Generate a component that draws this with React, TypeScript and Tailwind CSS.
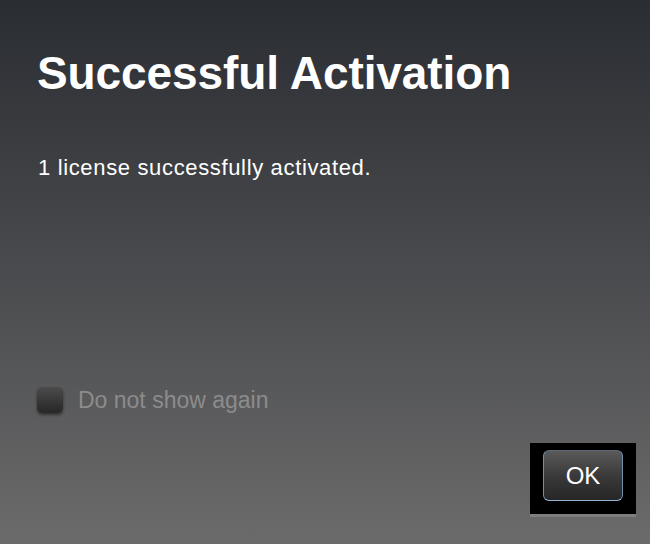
import { useState } from "react";

export default function App() {
  const [dontShow, setDontShow] = useState(false);

  return (
    <main
      className="h-[544px] w-[650px] flex flex-col bg-gradient-to-b from-[#2a2d32] via-[#4a4b4e] to-[#6b6b6b] text-white"
      style={{ fontFamily: '"Liberation Sans", Arial, sans-serif' }}
    >
      {/* Header */}
      <h1 className="pl-[37px] pt-[50px] text-[46px] font-bold leading-none tracking-[-0.1px]">
        Successful Activation
      </h1>

      <p className="pl-[38px] pt-[61px] text-[22px] leading-none tracking-[0.65px]">
        1 license successfully activated.
      </p>

      {/* Checkbox */}
      <label className="mt-[208px] ml-[37px] flex items-center gap-[15px] cursor-pointer">
        <button
          onClick={() => setDontShow(!dontShow)}
          className="h-[26px] w-[26px] rounded-[5px] bg-gradient-to-b from-[#4c4c4c] to-[#272727] shadow-[0_2px_3px_rgba(0,0,0,0.45)] flex items-center justify-center"
        >
          {dontShow && <span className="text-[16px] text-white">✓</span>}
        </button>
        <span className="text-[23px] leading-none text-[#8c8c8c]">
          Do not show again
        </span>
      </label>

      {/* OK Button */}
      <div className="mt-[30px] mr-[14px] self-end border-b-[3px] border-[#7e7e7e]">
        <div className="w-[106px] h-[71px] bg-black pl-[13px] pt-[7px]">
          <button className="w-[80px] h-[51px] rounded-[6px] border border-t-[#5d6a77] border-x-[#7090b0] border-b-[#94b6d6] bg-gradient-to-b from-[#5a5a5a] via-[#3a3a3a] to-[#262626] text-[24px] text-white leading-none">
            OK
          </button>
        </div>
      </div>
    </main>
  );
}
